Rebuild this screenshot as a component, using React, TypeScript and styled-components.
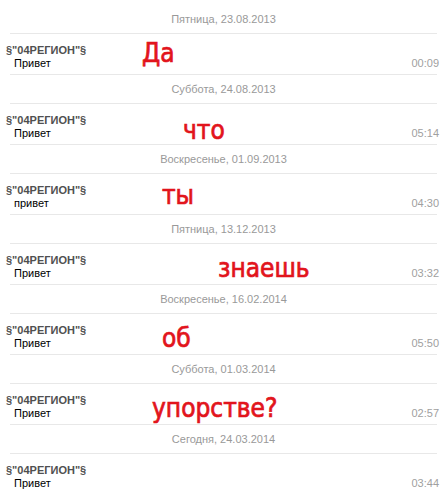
import React from "react";
import styled, { createGlobalStyle } from "styled-components";

const Global = createGlobalStyle`
  html, body { margin: 0; padding: 0; background: #fff; }
  body { font-family: "Liberation Sans", Arial, sans-serif; }
`;

const Page = styled.div`
  width: 447px;
  padding-top: 5px;
  display: flex;
  flex-direction: column;
`;

const DateHeader = styled.div`
  height: 28px;
  line-height: 28px;
  text-align: center;
  font-size: 11px;
  color: #999;
`;

const Divider = styled.div`
  height: 1px;
  margin: 0 10px;
  background: #e8e8e8;
`;

const Row = styled.div`
  position: relative;
  height: 40px;
  box-sizing: border-box;
  padding: 9px 8px 0 6px;
  display: flex;
  justify-content: space-between;
  align-items: flex-start;
`;

const Left = styled.div`
  display: flex;
  flex-direction: column;
`;

const Name = styled.div`
  font-size: 11px;
  line-height: 14px;
  font-weight: bold;
  color: #505050;
`;

const Text = styled.div`
  font-size: 11px;
  line-height: 12px;
  color: #000;
  padding-left: 8px;
`;

const Time = styled.div`
  font-size: 11px;
  line-height: 12px;
  color: #a0a0a0;
  margin-top: 14px;
`;

const Scribble = styled.div<{ $left: number; $top: number; $size: number }>`
  position: absolute;
  left: ${(p) => p.$left}px;
  top: ${(p) => p.$top}px;
  font-family: "DejaVu Sans Condensed", "DejaVu Sans", sans-serif;
  font-stretch: condensed;
  font-size: ${(p) => p.$size}px;
  line-height: 1;
  color: #e2141c;
  -webkit-text-stroke: 0.7px #e2141c;
  white-space: nowrap;
`;

type Msg = {
  date: string;
  text: string;
  time: string;
  word?: { w: string; left: number; top: number; size: number };
};

const messages: Msg[] = [
  { date: "Пятница, 23.08.2013", text: "Привет", time: "00:09", word: { w: "Да", left: 142, top: 6, size: 26 } },
  { date: "Суббота, 24.08.2013", text: "Привет", time: "05:14", word: { w: "что", left: 183, top: 13, size: 26 } },
  { date: "Воскресенье, 01.09.2013", text: "привет", time: "04:30", word: { w: "ты", left: 162, top: 8, size: 26 } },
  { date: "Пятница, 13.12.2013", text: "Привет", time: "03:32", word: { w: "знаешь", left: 218, top: 11, size: 26 } },
  { date: "Воскресенье, 16.02.2014", text: "Привет", time: "05:50", word: { w: "об", left: 162, top: 11, size: 26 } },
  { date: "Суббота, 01.03.2014", text: "Привет", time: "02:57", word: { w: "упорстве?", left: 152, top: 11, size: 26 } },
  { date: "Сегодня, 24.03.2014", text: "Привет", time: "03:44" },
];

export default function App() {
  return (
    <>
      <Global />
      <Page>
        {messages.map((m, i) => (
          <React.Fragment key={i}>
            <DateHeader>{m.date}</DateHeader>
            <Divider />
            <Row>
              <Left>
                <Name>§"04РЕГИОН"§</Name>
                <Text>{m.text}</Text>
              </Left>
              <Time>{m.time}</Time>
              {m.word && (
                <Scribble $left={m.word.left} $top={m.word.top} $size={m.word.size}>
                  {m.word.w}
                </Scribble>
              )}
            </Row>
            {i < messages.length - 1 && <Divider />}
          </React.Fragment>
        ))}
      </Page>
    </>
  );
}
